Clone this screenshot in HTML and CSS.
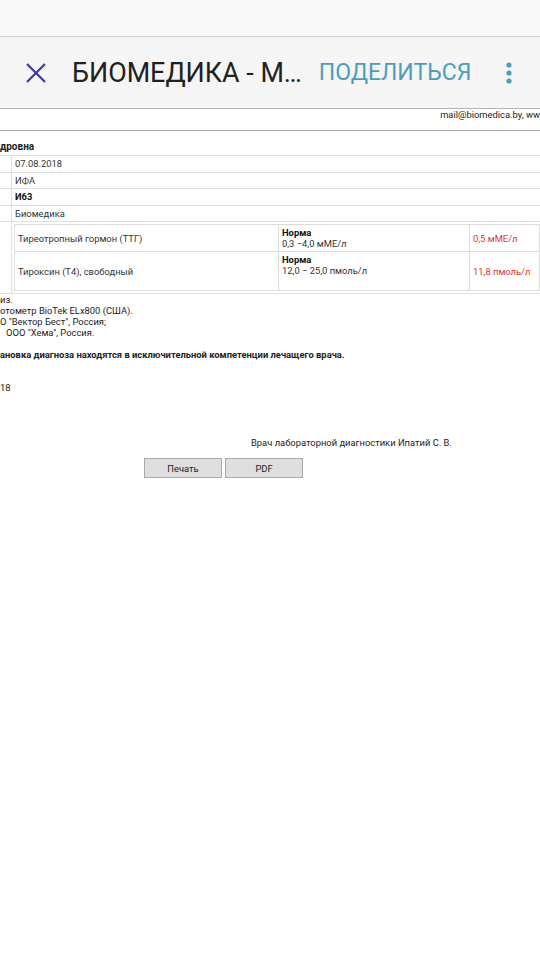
FILE: index.html
```html
<!DOCTYPE html>
<html lang="ru">
<head>
    <meta charset="UTF-8">
    <meta name="viewport" content="width=device-width, initial-scale=1.0">
    <title>Биомедика</title>
    <link rel="stylesheet" href="styles.css">
</head>
<body>
    <div class="statusbar"></div>

    <div class="toolbar">
        <svg class="close-icon" width="20" height="20" viewBox="0 0 20 20">
            <path d="M1 1 L19 19 M19 1 L1 19" stroke="#3f3a9e" stroke-width="2.2" fill="none"/>
        </svg>
        <div class="title">БИОМЕДИКА - М…</div>
        <div class="share">ПОДЕЛИТЬСЯ</div>
        <svg class="menu-icon" width="8" height="24" viewBox="0 0 8 24">
            <circle cx="4" cy="4" r="2.6" fill="#4e9dba"/>
            <circle cx="4" cy="12" r="2.6" fill="#4e9dba"/>
            <circle cx="4" cy="20" r="2.6" fill="#4e9dba"/>
        </svg>
    </div>

    <div class="page">
        <div class="contacts">mail@biomedica.by, ww</div>

        <div class="patient">дровна</div>

        <table class="info">
            <tr><td class="key"></td><td>07.08.2018</td></tr>
            <tr><td class="key"></td><td>ИФА</td></tr>
            <tr><td class="key"></td><td><b>И63</b></td></tr>
            <tr><td class="key"></td><td>Биомедика</td></tr>
            <tr>
                <td class="key"></td>
                <td class="results-cell">
                    <table class="results">
                        <tr class="row-short">
                            <td class="test">Тиреотропный гормон (ТТГ)</td>
                            <td class="norm"><b>Норма</b><br>0,3 &minus;4,0 мМЕ/л</td>
                            <td class="value">0,5 мМЕ/л</td>
                        </tr>
                        <tr class="row-tall">
                            <td class="test">Тироксин (Т4), свободный</td>
                            <td class="norm"><b>Норма</b><br>12,0 &minus; 25,0 пмоль/л<br>&nbsp;</td>
                            <td class="value">11,8 пмоль/л</td>
                        </tr>
                    </table>
                </td>
            </tr>
        </table>

        <div class="notes">
            <p>из.</p>
            <p>отометр BioTek ELx800 (США).</p>
            <p>О "Вектор Бест", Россия;</p>
            <p class="indent">ООО "Хема", Россия.</p>
            <p>&nbsp;</p>
            <p class="bold">ановка диагноза находятся в исключительной компетенции лечащего врача.</p>
            <p>&nbsp;</p>
            <p>&nbsp;</p>
            <p>18</p>
        </div>

        <div class="doctor">Врач лабораторной диагностики Ипатий С. В.</div>

        <div class="buttons">
            <button type="button">Печать</button>
            <button type="button">PDF</button>
        </div>
    </div>
</body>
</html>
```

FILE: styles.css
```css
body {
    margin: 0;
    padding: 0;
    background-color: #ffffff;
    font-family: Roboto, "Noto Sans", sans-serif;
    overflow: hidden;
}

.statusbar {
    height: 36px;
    background-color: #f9f9f9;
    border-bottom: 1px solid #cfcfcf;
}

.toolbar {
    height: 71px;
    display: flex;
    align-items: center;
    background-color: #f5f5f5;
    border-bottom: 1px solid #b5b5b5;
}

.close-icon {
    margin-left: 26px;
    flex: none;
}

.title {
    margin-left: 26px;
    font-size: 26.9px;
    color: #212121;
    white-space: nowrap;
}

.share {
    margin-left: 17px;
    font-size: 23px;
    color: #4e9dba;
    white-space: nowrap;
}

.menu-icon {
    margin-left: 34px;
    flex: none;
}

.page {
    font-size: 9.4px;
    color: #222;
    overflow: hidden;
}

.contacts {
    height: 22px;
    padding-top: 0;
    box-sizing: border-box;
    text-align: right;
    white-space: nowrap;
    border-bottom: 1px solid #a8a8a8;
}

.patient {
    font-weight: bold;
    font-size: 10px;
    padding-top: 10px;
    height: 24px;
    box-sizing: border-box;
}

.info {
    width: 100%;
    border-collapse: collapse;
    color: #333;
}

.info td {
    border-top: 1px solid #dedede;
    border-bottom: 1px solid #dedede;
    height: 15.5px;
    padding: 0 3px;
}

.info td.key {
    width: 11px;
    border-right: 1px solid #dedede;
    padding: 0;
}

.info b {
    color: #111;
}

.info td.results-cell {
    padding: 2px 0 2px 2px;
}

.results {
    width: 100%;
    border-collapse: collapse;
    border: 1px solid #dcdcdc;
}

.results td {
    border: 1px solid #dcdcdc;
    padding: 2px 3px;
    vertical-align: middle;
    line-height: 11px;
}

.results .test {
    width: 257px;
}

.results .norm {
    width: 184px;
    vertical-align: top;
    color: #333;
}

.results .norm b {
    color: #111;
}

.results .value {
    color: #e03434;
}

.row-short td {
    height: 20px;
}

.row-tall td {
    height: 34px;
}

.notes {
    padding-top: 0;
    color: #222;
}

.notes p {
    margin: 0;
    line-height: 11px;
    white-space: nowrap;
}

.notes .indent {
    padding-left: 6px;
}

.notes .bold {
    font-weight: bold;
}

.doctor {
    margin-top: 44px;
    padding-left: 251px;
    line-height: 11px;
    white-space: nowrap;
}

.buttons {
    display: flex;
    gap: 3px;
    padding-left: 144px;
    margin-top: 10px;
}

.buttons button {
    width: 78px;
    height: 20px;
    background-color: #dedede;
    border: 1px solid #a9a9a9;
    font-family: Roboto, "Noto Sans", sans-serif;
    font-size: 9.4px;
    color: #222;
    padding: 0;
}
```
